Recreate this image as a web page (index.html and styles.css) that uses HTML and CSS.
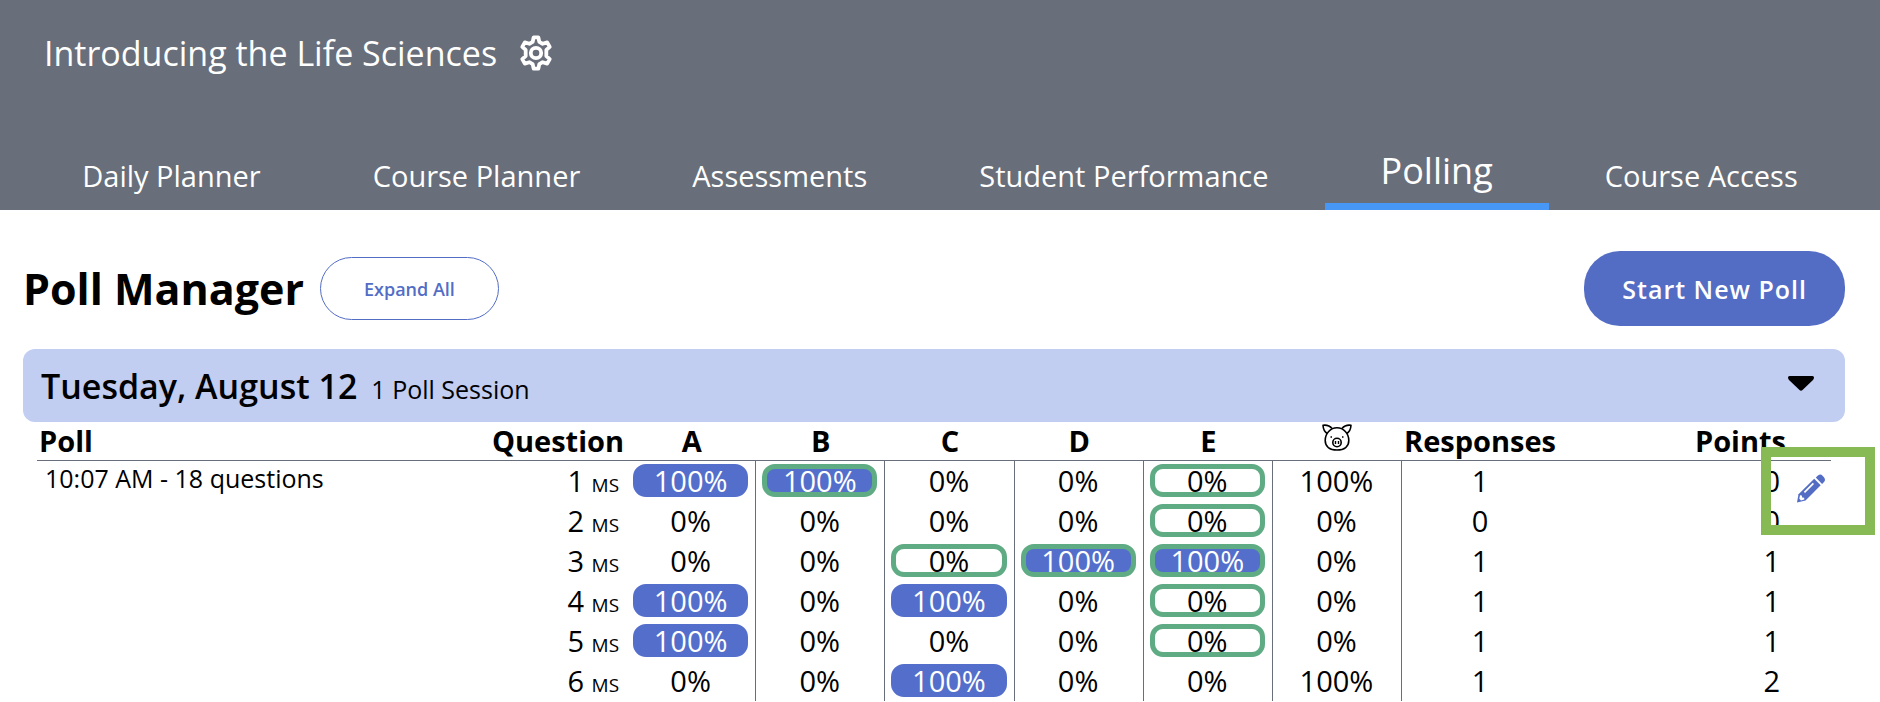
FILE: index.html
```html
<!DOCTYPE html>
<html lang="en">
<head>
    <meta charset="UTF-8">
    <meta name="viewport" content="width=device-width, initial-scale=1.0">
    <title>Poll Manager</title>
    <link rel="stylesheet" href="styles.css">
</head>
<body>
    <header class="header">
        <div class="course">
            <h1>Introducing the Life Sciences</h1>
            <button class="icon-button" aria-label="Course settings">
                <svg class="gear" viewBox="0 0 34 38" fill="none" stroke="#fff" stroke-width="4" stroke-linejoin="round">
                    <path d="M14.500 2.500h5l1 4.800 3.500 2 4.800-1.500 2.700 4.700-3.600 3.300v6.400l3.600 3.300-2.700 4.700-4.800-1.500-3.500 2-1 4.800h-5l-1-4.800-3.500-2-4.800 1.500-2.700-4.700 3.600-3.300v-6.400l-3.600-3.300 2.700-4.700 4.800 1.500 3.500-2z"/>
                    <circle cx="17" cy="19" r="5.500"/>
                </svg>
            </button>
        </div>
        <nav class="tabs">
            <a href="#">Daily Planner</a>
            <a href="#">Course Planner</a>
            <a href="#">Assessments</a>
            <a href="#">Student Performance</a>
            <a href="#" class="active">Polling</a>
            <a href="#">Course Access</a>
        </nav>
    </header>

    <main>
        <div class="toolbar">
            <h2>Poll Manager</h2>
            <button class="expand">Expand All</button>
            <button class="start">Start New Poll</button>
        </div>

        <section>
            <div class="day">
                <h3>Tuesday, August 12</h3>
                <span class="sessions">1 Poll Session</span>
                <button class="icon-button toggle" aria-label="Collapse day">
                    <svg class="caret" viewBox="0 0 26 15"><path d="M1.500 0h23q1.500 0 1.500 1.500t-1 2.400L14.500 14q-1.500 1.400-3 0L1 3.900Q0 3 0 1.500T1.500 0z"/></svg>
                </button>
            </div>

            <table class="polls">
                <colgroup>
                    <col class="col-poll">
                    <col class="col-question">
                    <col class="col-answer" span="6">
                    <col class="col-responses">
                    <col class="col-points">
                    <col class="col-edit">
                </colgroup>
                <thead>
                    <tr>
                        <th class="poll">Poll</th>
                        <th class="question">Question</th>
                        <th>A</th>
                        <th>B</th>
                        <th>C</th>
                        <th>D</th>
                        <th>E</th>
                        <th>
                            <svg class="pig" viewBox="0 0 30 27" fill="none" stroke="#000" stroke-width="1.600" stroke-linejoin="round" role="img" aria-label="No answer">
                                <path d="M10 4.500C8 2 4 .800 1 1.200c.200 3.600 1.800 6.800 4.300 8.300M20 4.500C22 2 26 .800 29 1.200c-.200 3.600-1.800 6.800-4.300 8.300"/>
                                <path d="M15 3.800C8.500 3.800 3.200 9.500 3.200 16.500c0 6 4.500 9.500 11.800 9.500s11.800-3.500 11.800-9.500C26.800 9.500 21.500 3.800 15 3.800z"/>
                                <circle cx="15" cy="18.500" r="4.200"/>
                                <path d="M13.500 17v3M16.500 17v3" stroke-width="1.400"/>
                                <path d="M8.500 13H10M20 13h1.500" stroke-width="1.500"/>
                            </svg>
                        </th>
                        <th>Responses</th>
                        <th class="points">Points</th>
                        <th></th>
                    </tr>
                </thead>
                <tbody>
                    <tr>
                        <td class="poll" rowspan="6">10:07 AM - 18 questions</td>
                        <td class="question">1 <small>MS</small></td>
                        <td class="answer"><span class="pill picked">100%</span></td>
                        <td class="answer"><span class="pill picked correct">100%</span></td>
                        <td class="answer"><span class="pill">0%</span></td>
                        <td class="answer"><span class="pill">0%</span></td>
                        <td class="answer"><span class="pill correct">0%</span></td>
                        <td class="answer"><span class="pill">100%</span></td>
                        <td>1</td>
                        <td class="points">0</td>
                        <td class="edit" rowspan="6">
                            <button class="icon-button" aria-label="Edit poll">
                                <svg class="pencil" viewBox="0 0 28 28">
                                    <path fill="#536dc5" d="M18.800 3l2.200-2q2.400-2 4.600.3l1.300 1.400q2.100 2.400.1 4.700l-1.900 2z"/>
                                    <path fill="#536dc5" d="M17.200 4.300l6.500 6.500L8.500 26 0 28l1.500-8.300z"/>
                                    <path fill="#fff" d="M15.800 8.200l1.200 1.200L8 18.400l-1.200-1.200zM3 20.800l1.800.1.400 2 2 .4.100 1.800-3.300.8-1.700-1.700z"/>
                                </svg>
                            </button>
                            <div class="highlight"></div>
                        </td>
                    </tr>
                    <tr>
                        <td class="question">2 <small>MS</small></td>
                        <td class="answer"><span class="pill">0%</span></td>
                        <td class="answer"><span class="pill">0%</span></td>
                        <td class="answer"><span class="pill">0%</span></td>
                        <td class="answer"><span class="pill">0%</span></td>
                        <td class="answer"><span class="pill correct">0%</span></td>
                        <td class="answer"><span class="pill">0%</span></td>
                        <td>0</td>
                        <td class="points">0</td>
                    </tr>
                    <tr>
                        <td class="question">3 <small>MS</small></td>
                        <td class="answer"><span class="pill">0%</span></td>
                        <td class="answer"><span class="pill">0%</span></td>
                        <td class="answer"><span class="pill correct">0%</span></td>
                        <td class="answer"><span class="pill picked correct">100%</span></td>
                        <td class="answer"><span class="pill picked correct">100%</span></td>
                        <td class="answer"><span class="pill">0%</span></td>
                        <td>1</td>
                        <td class="points">1</td>
                    </tr>
                    <tr>
                        <td class="question">4 <small>MS</small></td>
                        <td class="answer"><span class="pill picked">100%</span></td>
                        <td class="answer"><span class="pill">0%</span></td>
                        <td class="answer"><span class="pill picked">100%</span></td>
                        <td class="answer"><span class="pill">0%</span></td>
                        <td class="answer"><span class="pill correct">0%</span></td>
                        <td class="answer"><span class="pill">0%</span></td>
                        <td>1</td>
                        <td class="points">1</td>
                    </tr>
                    <tr>
                        <td class="question">5 <small>MS</small></td>
                        <td class="answer"><span class="pill picked">100%</span></td>
                        <td class="answer"><span class="pill">0%</span></td>
                        <td class="answer"><span class="pill">0%</span></td>
                        <td class="answer"><span class="pill">0%</span></td>
                        <td class="answer"><span class="pill correct">0%</span></td>
                        <td class="answer"><span class="pill">0%</span></td>
                        <td>1</td>
                        <td class="points">1</td>
                    </tr>
                    <tr>
                        <td class="question">6 <small>MS</small></td>
                        <td class="answer"><span class="pill">0%</span></td>
                        <td class="answer"><span class="pill">0%</span></td>
                        <td class="answer"><span class="pill picked">100%</span></td>
                        <td class="answer"><span class="pill">0%</span></td>
                        <td class="answer"><span class="pill">0%</span></td>
                        <td class="answer"><span class="pill">100%</span></td>
                        <td>1</td>
                        <td class="points">2</td>
                    </tr>
                </tbody>
            </table>
        </section>
    </main>
</body>
</html>
```
FILE: styles.css
```css
* { box-sizing: border-box; }
body { margin: 0; font-family: "Open Sans", "Noto Sans", sans-serif; color: #000; background: #fff; }
h1, h2, h3 { margin: 0; }
button { font-family: inherit; cursor: pointer; }
svg { display: block; }
.icon-button { padding: 0; border: none; background: none; }

/* Header */
.header { background: #686e7a; color: #fff; }
.course { display: flex; align-items: center; gap: 22px; height: 106px; padding-left: 44px; }
.course h1 { font-size: 34px; font-weight: 400; }
.gear { width: 34px; height: 36px; }
.tabs { display: flex; justify-content: center; height: 104px; }
.tabs a { display: flex; align-items: center; padding: 34px 56px 0; color: #fff; font-size: 29px; text-decoration: none; white-space: nowrap; }
.tabs .active { padding-top: 32px; border-bottom: 7px solid #4697f6; font-size: 36px; }

/* Toolbar */
main { padding: 41px 35px 0 23px; }
.toolbar { display: flex; align-items: center; gap: 16px; margin-bottom: 23px; }
.toolbar h2 { font-size: 43px; line-height: 60px; }
.expand { height: 63px; padding: 0 43px; border: 1px solid #536dc5; border-radius: 32px; background: #fff; color: #536dc5; font-size: 18px; font-weight: 600; }
.start { height: 75px; margin-left: auto; padding: 0 38px; border: none; border-radius: 36px; background: #536dc5; color: #fff; font-size: 25px; font-weight: 600; letter-spacing: 1px; }

/* Day bar */
.day { display: flex; align-items: baseline; gap: 14px; height: 73px; padding: 14px 31px 0 18px; border-radius: 12px; background: #c1cdf1; }
.day h3 { font-size: 34px; font-weight: 600; }
.sessions { font-size: 25px; }
.toggle { align-self: flex-start; margin: 13px 0 0 auto; }
.caret { width: 26px; height: 15px; }

/* Poll table */
.polls { width: calc(100% - 28px); margin-left: 14px; border-collapse: separate; border-spacing: 0; table-layout: fixed; font-size: 29px; line-height: 38px; text-align: center; }
.col-question { width: 146px; }
.col-answer { width: 7.2%; }
.col-responses { width: 156px; }
.col-points { width: 230px; }
.col-edit { width: 43px; }
.polls th, .polls td { padding: 0; }
.polls th { height: 39px; border-bottom: 1px solid #686e7a; }
.polls td { height: 40px; }
.polls th.poll { padding-left: 2px; text-align: left; }
.polls td.poll { padding-left: 8px; font-size: 25px; line-height: 34px; text-align: left; vertical-align: top; }
.polls th.question { padding-right: 3px; text-align: right; }
.polls td.question { padding-right: 8px; text-align: right; }
.polls small { font-size: 19px; line-height: 1; }
.polls th.points { padding-right: 2px; text-align: right; }
.polls td.points { padding-right: 8px; text-align: right; }
.polls td.answer { padding: 3px 7px 0 6px; border-right: 1px solid #686e7a; vertical-align: top; }
.pill { display: block; height: 33px; border: 5px solid transparent; border-radius: 13px; line-height: 23px; }
.picked { border-color: #536fcb; background: #536fcb; color: #fff; }
.correct { border-color: #5eab84; }
.pig { width: 30px; height: 27px; margin: -8px auto 0; }
.polls td.edit { position: relative; padding: 12px 0 0 3px; vertical-align: top; }
.pencil { width: 28px; height: 29px; }
.highlight { position: absolute; top: -14px; right: -44px; width: 114px; height: 88px; border: 10px solid #87b954; pointer-events: none; }
```
